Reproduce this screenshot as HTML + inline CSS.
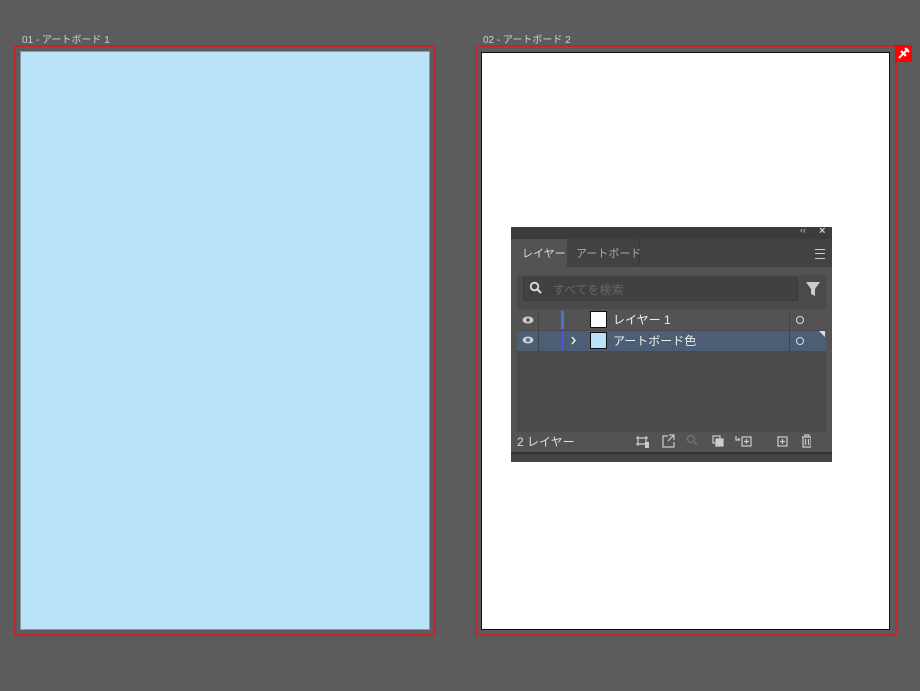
<!DOCTYPE html><html><head><meta charset="utf-8"><style>
body{margin:0;width:920px;height:691px;background:#5c5c5c;position:relative;overflow:hidden;font-family:"Liberation Sans","Noto Sans CJK JP",sans-serif}
.a{position:absolute}
.lbl{color:#d0d0d0;font-size:10px}
.t{color:#ddd;font-size:12px}
</style></head><body>
<div class="a lbl" style="left:22px;top:31px">01 - アートボード 1</div>
<div class="a lbl" style="left:483px;top:31px">02 - アートボード 2</div>
<div class="a" style="left:14px;top:45px;width:418px;height:587px;border:2px solid #c1272d"></div>
<div class="a" style="left:20px;top:51px;width:408px;height:577px;background:#bae3f8;border:1px solid #8a9aa2"></div>
<div class="a" style="left:475px;top:45px;width:418px;height:587px;border:2px solid #c1272d"></div>
<div class="a" style="left:481px;top:52px;width:407px;height:576px;background:#fff;border:1px solid #111"></div>
<div class="a" style="left:895px;top:45px;width:17px;height:17px;background:#f00"><svg width="17" height="17"><path d="M4 13L13 4M6 6l5 5M10 3l4 4" stroke="#fff" stroke-width="2"/></svg></div>

<div class="a" style="left:511px;top:227px;width:321px;height:233px;background:#535353">
 <div class="a" style="left:0;top:0;width:321px;height:12px;background:#3c3c3c"></div>
 <div class="a" style="left:289px;top:-2px;color:#ccc;font-size:9px">‹‹</div>
 <div class="a" style="left:308px;top:-2px;color:#ccc;font-size:11px;font-weight:bold">×</div>
 <div class="a" style="left:0;top:12px;width:321px;height:28px;background:#424242"></div>
 <div class="a" style="left:0;top:12px;width:56px;height:28px;background:#535353"></div>
 <div class="a" style="left:56px;top:12px;width:72px;height:28px;border-right:1px solid #383838"></div>
 <div class="a" style="left:11px;top:18px;color:#ddd;font-size:11px">レイヤー</div>
 <div class="a" style="left:65px;top:18px;color:#aaa;font-size:11px">アートボード</div>
 <div class="a" style="left:304px;top:22px;width:10px;height:8px;border-top:1px solid #ccc;border-bottom:1px solid #ccc"></div>
 <div class="a" style="left:304px;top:26px;width:10px;height:1px;background:#ccc"></div>
 <div class="a" style="left:6px;top:48px;width:309px;height:157px;background:#4a4a4a"></div>
 <div class="a" style="left:12px;top:50px;width:273px;height:22px;background:#414141;border:1px solid #3a3a3a;border-radius:2px"></div>
 <svg class="a" style="left:18px;top:54px" width="14" height="14"><circle cx="5.5" cy="5.5" r="3.8" stroke="#ddd" stroke-width="1.8" fill="none"/><path d="M8.5 8.5L12 12" stroke="#ddd" stroke-width="2"/></svg>
 <div class="a" style="left:42px;top:54px;color:#666;font-size:12px">すべてを検索</div>
 <svg class="a" style="left:295px;top:54px" width="14" height="16"><path d="M0 1h14L9 8v7L5 13V8z" fill="#ccc"/></svg>
 <div class="a" style="left:6px;top:82px;width:309px;height:21px;background:#535353;border-bottom:1px solid #4a4a4a"></div>
 <div class="a" style="left:6px;top:104px;width:309px;height:20px;background:#4b5e74"></div>
 <div class="a" style="left:27px;top:82px;width:1px;height:42px;background:#444"></div>
 <div class="a" style="left:278px;top:82px;width:1px;height:42px;background:#444"></div>
 <div class="a" style="left:50px;top:84px;width:3px;height:18px;background:#4f6fe0"></div>
 <div class="a" style="left:50px;top:105px;width:3px;height:18px;background:#4f4fe0"></div>
 <svg class="a" style="left:11px;top:89px" width="12" height="8"><ellipse cx="6" cy="4" rx="5.5" ry="3.5" fill="#ccc"/><circle cx="6" cy="4" r="1.8" fill="#535353"/></svg>
 <svg class="a" style="left:11px;top:109px" width="12" height="8"><ellipse cx="6" cy="4" rx="5.5" ry="3.5" fill="#ccc"/><circle cx="6" cy="4" r="1.8" fill="#4b5e74"/></svg>
 <svg class="a" style="left:60px;top:109px" width="6" height="9"><path d="M1 1l3 3.5L1 8" stroke="#eee" stroke-width="1.5" fill="none"/></svg>
 <div class="a" style="left:79px;top:84px;width:15px;height:15px;background:#fff;border:1px solid #111"></div>
 <div class="a" style="left:79px;top:105px;width:15px;height:15px;background:#bae3f8;border:1px solid #111"></div>
 <div class="a" style="left:102px;top:84px;color:#eee;font-size:12px">レイヤー 1</div>
 <div class="a" style="left:102px;top:105px;color:#eee;font-size:12px">アートボード色</div>
 <div class="a" style="left:285px;top:89px;width:6px;height:6px;border:1px solid #ddd;border-radius:50%"></div>
 <div class="a" style="left:285px;top:110px;width:6px;height:6px;border:1px solid #ddd;border-radius:50%"></div>
 <div class="a" style="left:308px;top:104px;width:0;height:0;border-left:6px solid transparent;border-top:6px solid #ddd"></div>
 <div class="a t" style="left:6px;top:206px">2 レイヤー</div>
 <svg class="a" style="left:125px;top:206px" width="175" height="16" fill="none" stroke="#ccc" stroke-width="1.2">
  <path d="M2 3v10M0 5h12M0 11h12M10 3v10"/><rect x="9" y="9" width="4" height="6" fill="#ccc" stroke="none"/>
  <path d="M32 3h-5v11h11v-5M33 2h5v5M38 2l-6 6"/>
  <g stroke="#777"><circle cx="55" cy="6" r="3.5"/><path d="M58 9l3 3"/></g>
  <rect x="77" y="3" width="7" height="7"/><rect x="80" y="6" width="7" height="7" fill="#ccc"/>
  <path d="M100 3v4h4M102 5l2 2"/><rect x="106" y="4" width="9" height="9"/><path d="M110.5 6v5M108 8.5h5"/>
  <rect x="142" y="4" width="9" height="9"/><path d="M146.5 6v5M144 8.5h5"/>
  <path d="M166 4h10M169 4V2h4v2M167 4v10h8V4M169.5 6v6M172.5 6v6"/>
 </svg>
 <div class="a" style="left:0;top:225px;width:321px;height:8px;background:#444;border-top:2px solid #333"></div>
</div>
</body></html>
